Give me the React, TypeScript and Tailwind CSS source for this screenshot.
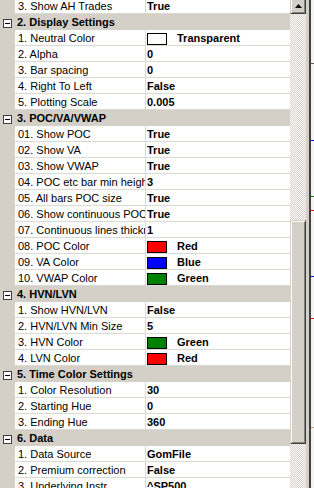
import React from "react";

type Item = { label: string; value: string; color?: string };
type Section = { title?: string; items: Item[] };

const sections: Section[] = [
  { items: [{ label: "3. Show AH Trades", value: "True" }] },
  {
    title: "2. Display Settings",
    items: [
      { label: "1. Neutral Color", value: "Transparent", color: "#ffffff" },
      { label: "2. Alpha", value: "0" },
      { label: "3. Bar spacing", value: "0" },
      { label: "4. Right To Left", value: "False" },
      { label: "5. Plotting Scale", value: "0.005" },
    ],
  },
  {
    title: "3. POC/VA/VWAP",
    items: [
      { label: "01. Show POC", value: "True" },
      { label: "02. Show VA", value: "True" },
      { label: "03. Show VWAP", value: "True" },
      { label: "04. POC etc bar min height", value: "3" },
      { label: "05. All bars POC size", value: "True" },
      { label: "06. Show continuous POC", value: "True" },
      { label: "07. Continuous lines thickness", value: "1" },
      { label: "08. POC Color", value: "Red", color: "#ff0000" },
      { label: "09. VA Color", value: "Blue", color: "#0000ff" },
      { label: "10. VWAP Color", value: "Green", color: "#008000" },
    ],
  },
  {
    title: "4. HVN/LVN",
    items: [
      { label: "1. Show HVN/LVN", value: "False" },
      { label: "2. HVN/LVN Min Size", value: "5" },
      { label: "3. HVN Color", value: "Green", color: "#008000" },
      { label: "4. LVN Color", value: "Red", color: "#ff0000" },
    ],
  },
  {
    title: "5. Time Color Settings",
    items: [
      { label: "1. Color Resolution", value: "30" },
      { label: "2. Starting Hue", value: "0" },
      { label: "3. Ending Hue", value: "360" },
    ],
  },
  {
    title: "6. Data",
    items: [
      { label: "1. Data Source", value: "GomFile" },
      { label: "2. Premium correction", value: "False" },
      { label: "3. Underlying Instr", value: "^SP500" },
    ],
  },
];

// bits of the chart peeking out on the right edge
const ticks = [
  { y: 63, c: "#606060" },
  { y: 140, c: "#0000ff" },
  { y: 196, c: "#008000" },
  { y: 210, c: "#ff0000" },
  { y: 276, c: "#0000ff" },
  { y: 318, c: "#ff0000" },
  { y: 427, c: "#c8a070" },
];

function Category({ title }: { title: string }) {
  return (
    <div className="flex h-[16px] shrink-0 bg-[#d4d0c8]">
      <div className="w-[15px] shrink-0 pl-[3px] pt-[5px]">
        <svg width="9" height="9" viewBox="0 0 9 9" className="block">
          <rect x="0.5" y="0.5" width="8" height="8" fill="#ffffff" stroke="#404040" />
          <line x1="2" y1="4.5" x2="7" y2="4.5" stroke="#000000" />
        </svg>
      </div>
      <div className="whitespace-nowrap pl-[2px] pt-[1px] font-bold leading-[15px]">{title}</div>
    </div>
  );
}

function Row({ item }: { item: Item }) {
  return (
    <div className="flex h-[16px] shrink-0">
      <div className="w-[15px] shrink-0 bg-[#d4d0c8]" />
      <div className="w-[131px] shrink-0 overflow-hidden whitespace-nowrap border-r border-b border-[#dcd9d2] bg-white pl-[3px] pt-[1px] leading-[15px]">
        {item.label}
      </div>
      <div className="flex min-w-0 flex-1 items-start overflow-hidden whitespace-nowrap border-b border-[#dcd9d2] bg-white pl-[1px] pt-[1px] font-bold leading-[15px]">
        {item.color && (
          <span
            className="mt-[2px] mr-[10px] h-[12px] w-[20px] shrink-0 border border-black"
            style={{ backgroundColor: item.color }}
          />
        )}
        <span>{item.value}</span>
      </div>
    </div>
  );
}

function Raised({ className, children }: { className: string; children?: React.ReactNode }) {
  return (
    <div
      className={`border border-t-[#d4d0c8] border-l-[#d4d0c8] border-r-[#404040] border-b-[#404040] bg-[#d4d0c8] shadow-[inset_1px_1px_#ffffff,inset_-1px_-1px_#808080] ${className}`}
    >
      {children}
    </div>
  );
}

export default function App() {
  return (
    <div className="flex h-[488px] w-[314px] overflow-hidden bg-[#d4d0c8] font-['Liberation_Sans',Arial,sans-serif] text-[11px] text-black">
      <div className="-mt-[2px] flex w-[290px] shrink-0 flex-col">
        {sections.map((s, i) => (
          <React.Fragment key={i}>
            {s.title && <Category title={s.title} />}
            {s.items.map((it) => (
              <Row key={it.label} item={it} />
            ))}
          </React.Fragment>
        ))}
      </div>

      {/* vertical scrollbar */}
      <div className="-mt-[2px] flex w-[16px] shrink-0 flex-col bg-[image:repeating-conic-gradient(#d4d0c8_0%_25%,#ffffff_0%_50%)] bg-[length:2px_2px]">
        <Raised className="flex h-[16px] shrink-0 items-center justify-center">
          <svg width="7" height="4" viewBox="0 0 7 4" className="block">
            <polygon points="3.5,0 7,4 0,4" fill="#000000" />
          </svg>
        </Raised>
        <div className="h-[206px] shrink-0" />
        <Raised className="h-[224px] shrink-0" />
      </div>

      {/* edge of the chart panel behind */}
      <div className="flex flex-1">
        <div className="w-[3px] bg-[#d4d0c8]" />
        <div className="w-[2px] bg-[#404040]" />
        <div className="relative flex-1 bg-[#f4f4f4]">
          {ticks.map((t) => (
            <div
              key={t.y}
              className="absolute left-0 h-[1px] w-[3px]"
              style={{ top: t.y, backgroundColor: t.c }}
            />
          ))}
        </div>
      </div>
    </div>
  );
}
